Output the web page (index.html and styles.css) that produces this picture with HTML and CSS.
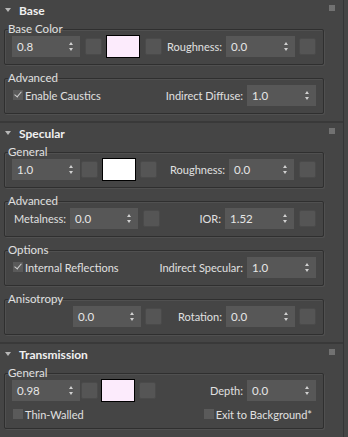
FILE: index.html
```html
<!DOCTYPE html>
<html>
<head>
<meta charset="utf-8">
<link rel="stylesheet" href="styles.css">
</head>
<body>
<div class="panel">
  <section class="rollout">
    <div class="head"><span class="tri"></span><span class="title">Base</span><span class="grip"></span></div>
    <fieldset class="grp">
      <legend>Base Color</legend>
      <div class="row">
        <div class="spin w68"><span>0.8</span><i class="arr"></i></div>
        <div class="sq m5"></div>
        <div class="swatch m4 pink"></div>
        <div class="sq m5"></div>
        <span class="fill"></span>
        <label class="lbl">Roughness:</label>
        <div class="spin w69"><span>0.0</span><i class="arr"></i></div>
        <div class="sq m4"></div>
      </div>
    </fieldset>
    <fieldset class="grp">
      <legend>Advanced</legend>
      <div class="row">
        <div class="chk on"></div><span class="ctext">Enable Caustics</span>
        <span class="fill"></span>
        <label class="lbl">Indirect Diffuse:</label>
        <div class="spin w69"><span>1.0</span><i class="arr"></i></div>
      </div>
    </fieldset>
  </section>
  <section class="rollout">
    <div class="head"><span class="tri"></span><span class="title">Specular</span><span class="grip"></span></div>
    <fieldset class="grp">
      <legend>General</legend>
      <div class="row">
        <div class="spin w68"><span>1.0</span><i class="arr"></i></div>
        <div class="sq m1"></div>
        <div class="swatch m4 white"></div>
        <div class="sq m4"></div>
        <span class="fill"></span>
        <label class="lbl">Roughness:</label>
        <div class="spin w65"><span>0.0</span><i class="arr"></i></div>
        <div class="sq m5"></div>
      </div>
    </fieldset>
    <fieldset class="grp">
      <legend>Advanced</legend>
      <div class="row">
        <label class="lbl first">Metalness:</label>
        <div class="spin w68"><span>0.0</span><i class="arr"></i></div>
        <div class="sq m5"></div>
        <span class="fill"></span>
        <label class="lbl">IOR:</label>
        <div class="spin w69"><span>1.52</span><i class="arr"></i></div>
        <div class="sq m5"></div>
      </div>
    </fieldset>
    <fieldset class="grp">
      <legend>Options</legend>
      <div class="row">
        <div class="chk on"></div><span class="ctext">Internal Reflections</span>
        <span class="fill"></span>
        <label class="lbl">Indirect Specular:</label>
        <div class="spin w69"><span>1.0</span><i class="arr"></i></div>
      </div>
    </fieldset>
    <fieldset class="grp">
      <legend>Anisotropy</legend>
      <div class="row indent">
        <div class="spin w68"><span>0.0</span><i class="arr"></i></div>
        <div class="sq m4"></div>
        <span class="fill"></span>
        <label class="lbl">Rotation:</label>
        <div class="spin w69"><span>0.0</span><i class="arr"></i></div>
        <div class="sq m4"></div>
      </div>
    </fieldset>
  </section>
  <section class="rollout last">
    <div class="head"><span class="tri"></span><span class="title">Transmission</span><span class="grip"></span></div>
    <fieldset class="grp">
      <legend>General</legend>
      <div class="row">
        <div class="spin w68"><span>0.98</span><i class="arr"></i></div>
        <div class="sq m1"></div>
        <div class="swatch m3 pink"></div>
        <div class="sq m4"></div>
        <span class="fill"></span>
        <label class="lbl">Depth:</label>
        <div class="spin w69"><span>0.0</span><i class="arr"></i></div>
      </div>
      <div class="row small">
        <div class="chk"></div><span class="ctext">Thin-Walled</span>
        <span class="fill"></span>
        <div class="chk"></div><span class="ctext">Exit to Background*</span>
      </div>
    </fieldset>
  </section>
</div>
</body>
</html>
```

FILE: styles.css
```css
html, body {
  margin: 0;
  padding: 0;
  background: #454545;
}
body {
  width: 348px;
  height: 437px;
  overflow: hidden;
  font-family: "Lato", "Open Sans", sans-serif;
  font-size: 11px;
  color: #e0e0e0;
}
.panel {
  width: 343px;
  border-right: 1px solid #353535;
  background: #454545;
  height: 437px;
}
.rollout {
  padding-bottom: 3px;
  border-bottom: 2px solid #393939;
}
.rollout.last { border-bottom: none; }
.head {
  display: flex;
  align-items: center;
  height: 20px;
  position: relative;
}
.tri {
  width: 0; height: 0;
  margin-left: 5px;
  margin-right: 8px;
  border-left: 3px solid transparent;
  border-right: 3px solid transparent;
  border-top: 4px solid #b8b8b8;
}
.title {
  font-weight: 700;
  color: #f0f0f0;
  font-size: 12px;
}
.grip {
  position: absolute;
  right: 8px;
  top: 5px;
  width: 6px;
  height: 6px;
  background-image: radial-gradient(circle, #8a8a8a 0.6px, transparent 0.9px);
  background-size: 2px 2px;
}
.grp {
  margin: 0 19px 4px 4px;
  padding: 3px 7px 7px 7px;
  border: 1px solid #2f2f2f;
  box-shadow: inset 1px 1px 0 #505050, 1px 1px 0 #505050;
  border-radius: 2px;
  min-width: 0;
}
.grp legend {
  padding: 0;
  margin-left: -4px;
  margin-bottom: -6px;
  line-height: 18px;
  font-size: 11.5px;
  color: #e0e0e0;
}
.row {
  display: flex;
  align-items: center;
  height: 22px;
}
.row.small { height: 18px; margin-top: 4px; margin-bottom: -2px; padding-right: 4px; }
.row.indent { padding-left: 61px; }
.fill { flex: 1; }
.spin {
  height: 21px;
  background: #575757;
  display: flex;
  align-items: center;
  padding-left: 5px;
  box-sizing: border-box;
  position: relative;
  color: #e6e6e6;
  font-size: 11.5px;
}
.w68 { width: 68px; }
.w69 { width: 69px; }
.w65 { width: 65px; }
.arr {
  position: absolute;
  right: 6px;
  top: 6px;
  width: 5px;
  height: 9px;
}
.arr::before, .arr::after {
  content: "";
  position: absolute;
  left: 0;
  border-left: 2.5px solid transparent;
  border-right: 2.5px solid transparent;
}
.arr::before { top: 0; border-bottom: 3px solid #d0d0d0; }
.arr::after { bottom: 0; border-top: 3px solid #d0d0d0; }
.sq {
  width: 15px;
  height: 15px;
  background: #555555;
  border: 1px solid #4a4a4a;
  border-radius: 2px;
}
.m1 { margin-left: 1px; }
.m3 { margin-left: 3px; }
.m4 { margin-left: 4px; }
.m5 { margin-left: 5px; }
.swatch {
  width: 32px;
  height: 21px;
  border: 1px solid #000;
}
.pink { background: #fcebfc; }
.white { background: #ffffff; }
.lbl { margin-left: 4px; margin-right: 4px; white-space: nowrap; }
.lbl.first { margin-left: 2px; }
.chk {
  width: 10px;
  height: 10px;
  background: #5a5a5a;
  margin-left: 1px;
  margin-right: 2px;
  position: relative;
}
.chk.on::after {
  content: "";
  position: absolute;
  left: 3px;
  top: 0px;
  width: 3px;
  height: 6px;
  border-right: 1.5px solid #cfcfcf;
  border-bottom: 1.5px solid #cfcfcf;
  transform: rotate(40deg);
}
.ctext { white-space: nowrap; }
```
